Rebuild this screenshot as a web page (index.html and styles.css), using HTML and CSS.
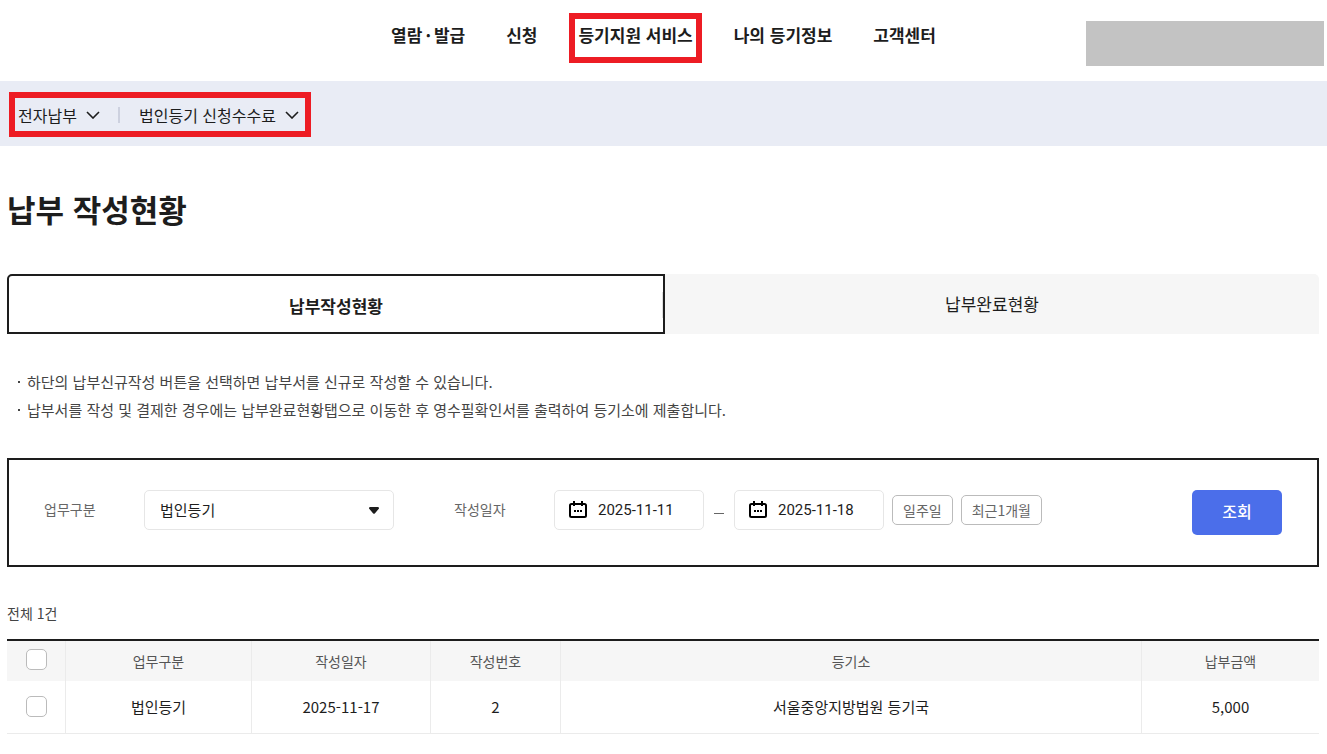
FILE: index.html
```
<!DOCTYPE html>
<html lang="ko">
<head>
    <meta charset="UTF-8">
    <meta name="viewport" content="width=device-width, initial-scale=1.0">
    <title>납부 작성현황</title>
    <link rel="stylesheet" href="styles.css">
</head>
<body>
    <header class="header">
        <nav class="gnb">
            <a href="#">열람<span class="dot">·</span>발급</a>
            <a href="#">신청</a>
            <a href="#" class="marked">등기지원 서비스</a>
            <a href="#">나의 등기정보</a>
            <a href="#">고객센터</a>
        </nav>
        <div class="user-area"></div>
    </header>

    <div class="location">
        <div class="location-box">
            <div class="location-select">
                <select aria-label="메뉴">
                    <option>전자납부</option>
                </select>
                <svg width="14" height="8" viewBox="0 0 14 8"><path d="M1 1l6 6 6-6" fill="none" stroke="#1d1d1d" stroke-width="1.6"/></svg>
            </div>
            <span class="divider"></span>
            <div class="location-select">
                <select aria-label="하위 메뉴">
                    <option>법인등기 신청수수료</option>
                </select>
                <svg width="14" height="8" viewBox="0 0 14 8"><path d="M1 1l6 6 6-6" fill="none" stroke="#1d1d1d" stroke-width="1.6"/></svg>
            </div>
        </div>
    </div>

    <main class="container">
        <h1>납부 작성현황</h1>

        <div class="tabs" role="tablist">
            <button type="button" class="tab active-tab" role="tab" aria-selected="true">납부작성현황</button>
            <button type="button" class="tab" role="tab" aria-selected="false">납부완료현황</button>
        </div>

        <ul class="notes">
            <li>하단의 납부신규작성 버튼을 선택하면 납부서를 신규로 작성할 수 있습니다.</li>
            <li>납부서를 작성 및 결제한 경우에는 납부완료현황탭으로 이동한 후 영수필확인서를 출력하여 등기소에 제출합니다.</li>
        </ul>

        <form class="search">
            <label class="field-label" for="type">업무구분</label>
            <div class="type-select">
                <select id="type">
                    <option>법인등기</option>
                </select>
                <svg width="10" height="7" viewBox="0 0 10 7"><path d="M1.2 0h7.6q1.2 0 1.2 1.2 0 .5-.4.9L6 6.3q-1 1-2 0L.4 2.1Q0 1.700 0 1.200 0 0 1.200 0z" fill="#1d1d1d"/></svg>
            </div>
            <label class="field-label date-label" for="from">작성일자</label>
            <div class="date">
                <svg width="18" height="18" viewBox="0 0 18 18"><path d="M2.500 3h13q1.500 0 1.500 1.500v10q0 1.500-1.500 1.500h-13Q1 16 1 14.500v-10Q1 3 2.500 3zM5 0v5M13 0v5" fill="none" stroke="#000" stroke-width="2"/><path d="M5 9h2v2H5zM8 9h2v2H8zM11 9h2v2h-2z"/></svg>
                <input type="text" id="from" value="2025-11-11">
            </div>
            <span class="dash"></span>
            <div class="date">
                <svg width="18" height="18" viewBox="0 0 18 18"><path d="M2.500 3h13q1.500 0 1.500 1.500v10q0 1.500-1.500 1.500h-13Q1 16 1 14.500v-10Q1 3 2.500 3zM5 0v5M13 0v5" fill="none" stroke="#000" stroke-width="2"/><path d="M5 9h2v2H5zM8 9h2v2H8zM11 9h2v2h-2z"/></svg>
                <input type="text" id="to" value="2025-11-18" aria-label="작성일자 종료일">
            </div>
            <button type="button" class="period">일주일</button>
            <button type="button" class="period">최근1개월</button>
            <button type="submit" class="search-btn">조회</button>
        </form>

        <p class="total">전체 1건</p>

        <table class="list">
            <thead>
                <tr>
                    <th class="col-check"><input type="checkbox" aria-label="전체 선택"></th>
                    <th class="col-type">업무구분</th>
                    <th class="col-date">작성일자</th>
                    <th class="col-no">작성번호</th>
                    <th>등기소</th>
                    <th class="col-price">납부금액</th>
                </tr>
            </thead>
            <tbody>
                <tr>
                    <td><input type="checkbox" aria-label="선택"></td>
                    <td>법인등기</td>
                    <td>2025-11-17</td>
                    <td>2</td>
                    <td>서울중앙지방법원 등기국</td>
                    <td>5,000</td>
                </tr>
            </tbody>
        </table>
    </main>
</body>
</html>
```
FILE: styles.css
```
* {
    box-sizing: border-box;
}
body {
    margin: 0;
    font-family: "Noto Sans CJK KR", sans-serif;
    font-size: 15px;
    color: #1d1d1d;
    background-color: #fff;
}
button, input, select {
    font: inherit;
    color: inherit;
}
svg {
    display: block;
    flex: none;
}

/* header */
.header {
    display: grid;
    grid-template-columns: 1fr auto 1fr;
    align-items: start;
    height: 81px;
}
.gnb {
    grid-column: 2;
    display: flex;
    gap: 41px;
    padding-top: 20px;
    font-size: 17px;
    font-weight: 700;
    line-height: 30px;
}
.gnb a {
    color: inherit;
    text-decoration: none;
    white-space: nowrap;
}
.gnb .dot {
    margin: 0 3px;
}
.gnb .marked {
    position: relative;
}
.marked::after {
    content: "";
    position: absolute;
    top: -7px;
    right: -9px;
    bottom: -13px;
    left: -9px;
    border: 6px solid #ed1c24;
}
.user-area {
    justify-self: end;
    width: 238px;
    height: 45px;
    margin: 21px 3px 0 0;
    background-color: #c3c3c3;
}

/* location bar */
.location {
    display: flex;
    height: 65px;
    padding: 11px 9px 9px;
    background-color: #e9ecf5;
}
.location-box {
    display: flex;
    align-items: center;
    padding: 0 6px 0 3px;
    border: 6px solid #ed1c24;
}
.location-select {
    display: flex;
    align-items: center;
    position: relative;
}
.location-select select {
    appearance: none;
    padding: 0 23px 0 0;
    border: 0;
    background: none;
    font-size: 16px;
}
.location-select svg {
    position: absolute;
    right: 0;
    pointer-events: none;
}
.divider {
    width: 2px;
    height: 16px;
    margin: 0 19px 0 18px;
    background-color: #cdd1df;
}

.container {
    padding: 0 8px 20px 7px;
}
h1 {
    margin: 40px 0 42px;
    font-size: 31px;
    font-weight: 700;
    line-height: 46px;
}

/* tabs */
.tabs {
    display: flex;
}
.tab {
    flex: 1;
    height: 60px;
    padding: 0 0 2px;
    border: 0;
    border-radius: 0 5px 0 0;
    background-color: #f6f6f6;
    font-size: 17px;
}
.active-tab {
    position: relative;
    padding-top: 4px;
    border: 2px solid #1d1d1d;
    border-radius: 5px 0 0 0;
    background-color: #fff;
    font-weight: 700;
}
.active-tab::after {
    content: "";
    position: absolute;
    top: 16px;
    right: 0;
    width: 1px;
    height: 26px;
    background-color: #ddd;
}

.notes {
    margin: 34px 0;
    padding: 0 0 0 20px;
    list-style: none;
    color: #444;
    line-height: 28px;
}
.notes li {
    position: relative;
}
.notes li::before {
    content: "";
    position: absolute;
    top: 13px;
    left: -9px;
    width: 2px;
    height: 2px;
    background-color: #444;
}

/* search form */
.search {
    display: flex;
    align-items: flex-start;
    padding: 30px 35px;
    border: 2px solid #1d1d1d;
}
.field-label {
    width: 100px;
    color: #666;
    font-size: 14px;
    line-height: 38px;
}
.date-label {
    margin-left: 60px;
}
.type-select, .date {
    display: flex;
    align-items: center;
    position: relative;
    height: 40px;
    border: 1px solid #e6e6e6;
    border-radius: 5px;
}
.type-select {
    width: 250px;
}
.type-select select {
    appearance: none;
    width: 100%;
    height: 100%;
    padding: 0 32px 2px 15px;
    border: 0;
    background: none;
}
.type-select svg {
    position: absolute;
    right: 14px;
    pointer-events: none;
}
.date {
    gap: 11px;
    width: 150px;
    padding-left: 14px;
}
.date input {
    width: 100%;
    min-width: 0;
    padding: 0;
    border: 0;
    background: none;
    font-family: Roboto, sans-serif;
}
.dash {
    width: 10px;
    height: 1px;
    margin: 23px 10px 0;
    background-color: #666;
}
.period {
    height: 30px;
    margin: 5px 0 0 8px;
    padding: 0 10px;
    border: 1px solid #bbb;
    border-radius: 5px;
    background-color: #fff;
    color: #666;
    font-size: 14px;
    line-height: 28px;
}
.search-btn {
    width: 90px;
    height: 45px;
    margin-left: auto;
    padding: 0 0 4px;
    border: 0;
    border-radius: 5px;
    background-color: #4b6eea;
    color: #fff;
    font-size: 16px;
    font-weight: 500;
}

/* list */
.total {
    margin: 36px 0 15px;
    color: #444;
    font-size: 14px;
    line-height: 21px;
}
.list {
    width: 100%;
    table-layout: fixed;
    border-collapse: separate;
    border-spacing: 0;
    border-top: 2px solid #1d1d1d;
    text-align: center;
}
.list th, .list td {
    padding: 0;
    border-right: 1px solid #ebebeb;
}
.list th:last-child, .list td:last-child {
    border-right: 0;
}
.list th {
    height: 40px;
    background-color: #f6f6f6;
    color: #555;
    font-size: 14px;
    font-weight: 400;
}
.list td {
    height: 53px;
    padding-bottom: 2px;
    border-bottom: 1px solid #ebebeb;
}
.col-check {
    width: 59px;
}
.col-type {
    width: 186px;
}
.col-date {
    width: 179px;
}
.col-no {
    width: 130px;
}
.col-price {
    width: 177px;
}
.list input {
    appearance: none;
    display: block;
    width: 21px;
    height: 21px;
    margin: 0 auto;
    border: 1px solid #bbb;
    border-radius: 5px;
    background-color: #fff;
}
.list th input {
    margin-bottom: 3px;
}
.list input:checked {
    background-color: #4b6eea;
}
```
